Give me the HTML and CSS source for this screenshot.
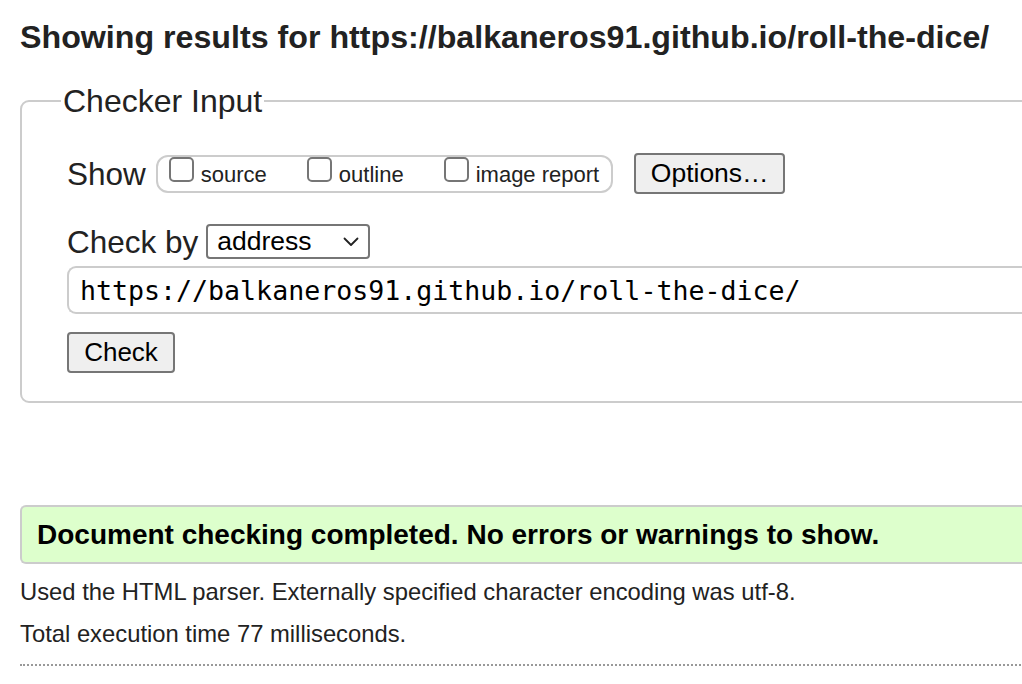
FILE: index.html
```html
<!DOCTYPE html>
<html lang="en">
<head>
<meta charset="utf-8">
<title>Showing results</title>
<link rel="stylesheet" href="styles.css">
</head>
<body>
<div class="page">
  <h2 class="heading">Showing results for https://balkaneros91.github.io/roll-the-dice/</h2>
  <fieldset class="checker">
    <legend class="legend">Checker Input</legend>
    <div class="row row-show">
      <span class="label-big">Show</span>
      <div class="show-group">
        <label class="opt"><input type="checkbox" class="cb"><span>source</span></label>
        <label class="opt"><input type="checkbox" class="cb"><span>outline</span></label>
        <label class="opt"><input type="checkbox" class="cb"><span>image report</span></label>
      </div>
      <button class="btn btn-options">Options…</button>
    </div>
    <div class="row row-by">
      <span class="label-big">Check by</span>
      <div class="select">
        <span>address</span>
        <svg class="chev" width="16" height="10" viewBox="0 0 16 10"><path d="M1.5 1.5 L8 8 L14.5 1.5" fill="none" stroke="#222" stroke-width="1.8" stroke-linecap="round" stroke-linejoin="round"/></svg>
      </div>
    </div>
    <div class="url">https://balkaneros91.github.io/roll-the-dice/</div>
    <button class="btn btn-check">Check</button>
  </fieldset>
  <div class="success">Document checking completed. No errors or warnings to show.</div>
  <p class="info first">Used the HTML parser. Externally specified character encoding was utf-8.</p>
  <p class="info">Total execution time 77 milliseconds.</p>
  <hr class="dots">
</div>
</body>
</html>
```
FILE: styles.css
```css
html, body {
  margin: 0;
  padding: 0;
  background: #fff;
  overflow: hidden;
}
body {
  font-family: "Liberation Sans", Arial, sans-serif;
  color: #222;
}
.page {
  width: 1200px;
  padding-left: 20px;
}
.heading {
  font-size: 32.2px;
  line-height: 38px;
  font-weight: bold;
  margin: 18px 0 0;
  white-space: nowrap;
}
.checker {
  margin: 27px 0 0;
  border: 2px solid #ccc;
  border-radius: 9px;
  padding: 0 0 28px 45px;
  min-width: 0;
}
.legend {
  font-size: 32px;
  line-height: 36px;
  padding: 0 2px;
  margin-left: -6px;
}
.row {
  display: flex;
  align-items: center;
}
.label-big {
  font-size: 31.5px;
  line-height: 36px;
}
.row-show {
  margin-top: 34px;
  height: 41px;
}
.show-group {
  margin-left: 10px;
  height: 34px;
  border: 2px solid #ccc;
  border-radius: 12px;
  padding: 0 12px 0 11px;
  display: flex;
  align-items: flex-start;
  gap: 40px;
}
.opt {
  display: flex;
  align-items: flex-end;
  gap: 7px;
  font-size: 22px;
  line-height: 24px;
}
.opt span {
  position: relative;
  top: 5px;
}
.cb {
  appearance: none;
  -webkit-appearance: none;
  width: 25px;
  height: 25px;
  margin: 0;
  border: 2px solid #767676;
  border-radius: 5px;
  background: #fff;
  box-sizing: border-box;
}
.btn {
  font-family: "Liberation Sans", Arial, sans-serif;
  color: #000;
  background: #efefef;
  border: 2px solid #767676;
  border-radius: 4px;
  padding: 0;
  box-sizing: border-box;
}
.btn-options {
  margin-left: 21px;
  width: 151px;
  height: 41px;
  font-size: 26.5px;
}
.row-by {
  margin-top: 30px;
  height: 35px;
}
.select {
  margin-left: 8px;
  width: 164px;
  height: 35px;
  box-sizing: border-box;
  border: 2px solid #767676;
  border-radius: 4px;
  display: flex;
  align-items: center;
  justify-content: space-between;
  padding: 0 9px 0 9px;
  font-size: 26.5px;
  color: #000;
}
.chev {
  display: block;
}
.url {
  margin-top: 7px;
  height: 48px;
  box-sizing: border-box;
  border: 2px solid #ccc;
  border-right: none;
  border-radius: 9px 0 0 9px;
  padding-left: 11px;
  display: flex;
  align-items: center;
  font-family: "DejaVu Sans Mono", monospace;
  font-size: 26.6px;
  color: #000;
}
.btn-check {
  display: block;
  margin-top: 18px;
  width: 108px;
  height: 41px;
  font-size: 26px;
}
.success {
  margin-top: 102px;
  height: 59px;
  box-sizing: border-box;
  background: #ddffcc;
  border: 2px solid #ccc;
  border-right: none;
  border-radius: 6px 0 0 6px;
  padding-left: 15px;
  display: flex;
  align-items: center;
  font-size: 28px;
  font-weight: bold;
  color: #000;
  white-space: nowrap;
}
.info {
  font-size: 23.8px;
  line-height: 28px;
  margin: 14px 0 0;
  white-space: nowrap;
}
.info.first {
  margin-top: 14px;
}
.dots {
  margin: 16px 0 0;
  border: none;
  border-top: 2px dotted #999;
  height: 0;
}
```
